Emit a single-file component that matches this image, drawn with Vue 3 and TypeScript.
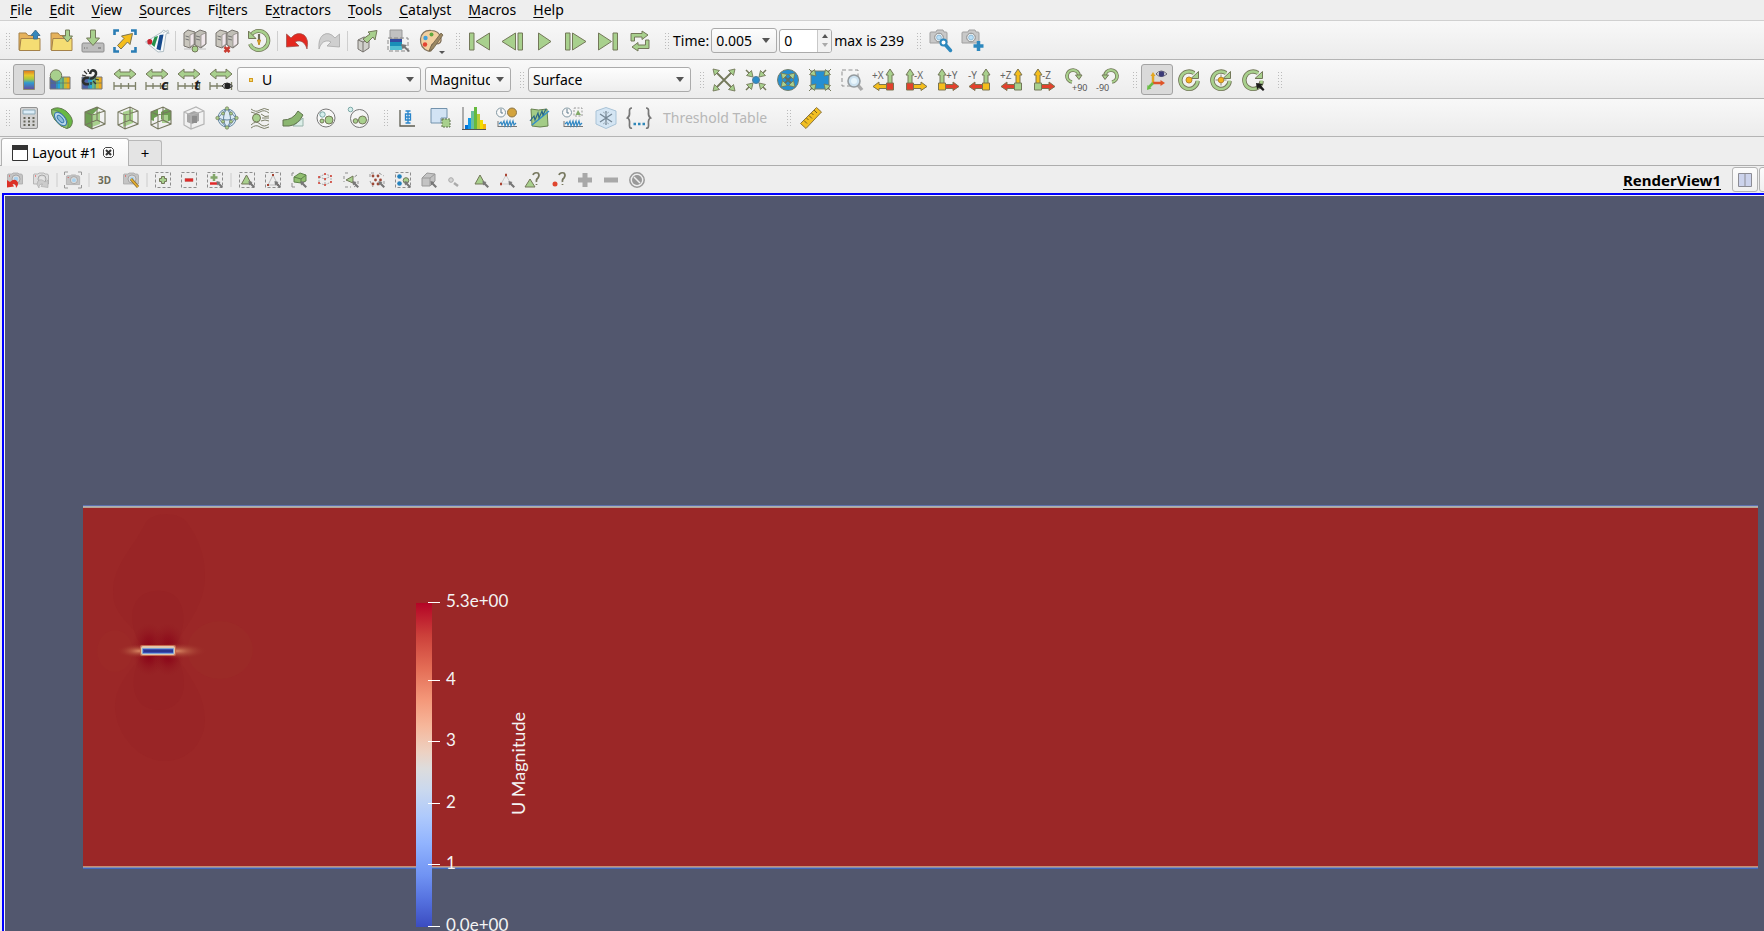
<script setup lang="ts">
import { ref } from 'vue'

interface Tool {
  kind: 'tool' | 'sep'
  icon?: string
  label?: string
  active?: boolean
}

const green = 'fill="#a8d08d" stroke="#737859"'
const yellow = 'fill="#f4bd1c" stroke="#7c7450"'
const red = 'fill="#e2412d" stroke="#7c7450"'
const dash = 'fill="none" stroke="#8f8f8f" stroke-dasharray="4 2.5"'

// Arrow head whose tip sits at (x, y); it points to the upper right at 0 degrees.
const chevron = (x: number, y: number, a: number) =>
  `<path transform="translate(${x} ${y}) rotate(${a})" d="M0 0L-6.500 1.500L-1.500 6.500Z" fill="#a8d08d" stroke="#737859" stroke-width=".9"/>`

const scaleTicks = '<path d="M1 18H23M1 14V22M8 15V21M15.500 15V21M22.500 14V22" fill="none" stroke="#7d8068" stroke-width="1.300"/>'
const doubleArrow = `<path d="M1 6L7 1V4H17V1L23 6L17 11V8H7V11Z" ${green}/>`
const jet =
  '<path d="M1 9H21V21H1Z" fill="#2da3c7"/><path d="M1 9H7V21H1Z" fill="#4d63a8"/><path d="M7 9H11V21H7Z" fill="#22a5dd"/><path d="M11 9H15V21H11Z" fill="#65b98c"/><path d="M15 9H18V21H15Z" fill="#c2bc3b"/><path d="M18 9H21V21H18Z" fill="#efaa1c"/><path d="M1 15H21M8 9V21M14 9V21" stroke="#5d7168" stroke-width=".7"/><path d="M1 9H21V21H1Z" fill="none" stroke="#777"/>'
const server = (mark: string) =>
  `<path d="M1 4L5 1L12 3V15L7 19L1 17Z" fill="#c9c6bd" stroke="#77736e"/><path d="M7 6V18L11 15V4Z" fill="#efe6ea" stroke="#77736e" stroke-width=".6"/><path d="M12 4L17 1L23 3V15L18 19L12 16Z" fill="#c0beb6" stroke="#77736e"/><path d="M18 6V18L22.500 15V4Z" fill="#efe6ea" stroke="#77736e" stroke-width=".6"/><path d="M2.500 7L6 8M2.500 10L6 11M13 7L17 8M13 10L17 11" stroke="#777"/>${mark}`
const cubeLines = '<path d="M2 6L14 1L22 5V18L9 23L2 19ZM2 6L9 9L22 5M9 9V23M14 1V14L2 19M14 14L22 18" fill="none" stroke="#76785f" stroke-width="1.100"/>'
const camera = (c: string) =>
  `<path d="M2 3H7L8 1H14L15 3H17Q18 3 18 4V14H1V4Q1 3 2 3Z" fill="${c}" stroke="#a0a0a0"/><circle cx="10" cy="8.500" r="4.300" fill="#e9eef0" stroke="#8c8c8c"/><circle cx="10" cy="8.500" r="2.400" fill="#b9dff7" stroke="#6da3c5" stroke-width=".6"/>`

const axisIcon = (text: string, up: string, side: string, corner: string, rightward: boolean) => {
  const x = rightward ? 6 : 18
  const dir = rightward ? 1 : -1
  const tx = rightward ? 10 : 0
  return `<path d="M${x - 2} 17V7H${x - 4}L${x} 1L${x + 4} 7H${x + 2}V17Z" ${up}/><path d="M${x} 16.500H${x + dir * 11}V14L${x + dir * 17} 18.500L${x + dir * 11} 22.500V20.500H${x}Z" ${side}/><path d="M${x - 3.5} 15H${x + 3.5}V22H${x - 3.5}Z" ${corner}/><text x="${tx}" y="10.500" font-family="Noto Sans, sans-serif" font-size="10" fill="#666">${text}</text>`
}

const rotateArrow = `<path d="M17 5A8.700 8.700 0 1 0 20.700 13" fill="none" stroke="#737859" stroke-width="4.400"/><path d="M17.500 5.500A8.700 8.700 0 1 0 20.700 12.500" fill="none" stroke="#a8d08d" stroke-width="2.600"/><path d="M21.500 3.500V10.500H14Z" ${green}/>`

const icons: Record<string, string> = {
  open: '<path d="M2 21V4H9L11 6.500H18V21Z" fill="#e6b25b" stroke="#a5824a"/><path d="M4 9.500H23V21.500H2.500Z" fill="#f5dd73" stroke="#a5824a"/><path d="M18.500 1L23 6.500H20.500V10H16.500V6.500H14Z" fill="#3488bd" stroke="#417393"/>',
  load: `<path d="M2 21V4H9L11 6.500H18V21Z" fill="#e6b25b" stroke="#a5824a"/><path d="M4 9.500H23V21.500H2.500Z" fill="#f5dd73" stroke="#a5824a"/><path d="M16.500 1H20.500V7H23.500L18.500 13L13.500 7H16.500Z" ${green}/>`,
  save: `<path d="M2 14H22Q23 14 23 16V22Q23 23 22 23H2Q1 23 1 22V16Q1 14 2 14Z" fill="#bdbdbd" stroke="#8d8d8d"/><path d="M3 19H4M5.500 19H6.500M17 19H20" stroke="#666"/><path d="M9.500 1H14.500V9H18.500L12 16.500L5.500 9H9.500Z" ${green}/>`,
  extract: '<path d="M1.500 6V1.500H6M18 1.500H22.500V6M22.500 18V22.500H18M6 22.500H1.500V18" fill="none" stroke="#2a7db5" stroke-width="2.600"/><path d="M8.500 7L19.500 4.500L17 15.500L14.500 13L8 20L4.500 16.500L11 9.500Z" fill="#f4bd1c" stroke="#7c7450"/>',
  paraview: '<path d="M.500 13L17 3L18.500 1L23.500 4L21 5L18.500 22.500L13 23Z" fill="#f7fafb" stroke="#9fb0b8" stroke-width=".8"/><ellipse cx="4.800" cy="12.800" rx="2.500" ry="2.800" fill="#c8222d"/><path d="M9.500 8L13 7L9.500 18L6.500 15.500Z" fill="#23904a"/><path d="M14.500 6L18.500 5.500L15.500 21.500L11.500 20Z" fill="#164a8c"/><path d="M18 4L23 1L24 5" stroke="#b4bec3" stroke-width=".8" fill="none"/>',
  connect: server(`<circle cx="12" cy="20" r="3" ${green}/><path d="M1 20H8.500M15.500 20H23" stroke="#aaa" stroke-width=".7"/>`),
  disconnect: server('<path d="M9.500 18L14.500 23M14.500 18L9.500 23" stroke="#c93b30" stroke-width="2.600"/>'),
  history: `<path d="M4 6A9.500 9.500 0 1 1 3 15" fill="none" stroke="#737859" stroke-width="4"/><path d="M4 6A9.500 9.500 0 1 1 3 15" fill="none" stroke="#a8d08d" stroke-width="2.500"/><path d="M1.500 2V9.500H9Z" ${green}/><path d="M12 5V12" stroke="#6f6f5a" stroke-width="2.200"/><path d="M10.500 11H13.500L12 16Z" fill="#e8b12c" stroke="#bf8a20"/>`,
  undo: '<path d="M1.500 5L6 9Q12 2 19 6Q24 10 22 20Q20 13 15 12Q12 11.500 10 13L14 17L1.500 18Z" fill="#e4281f" stroke="#9b4b45" stroke-width=".7"/>',
  redo: '<path d="M22.500 5L18 9Q12 2 6 6Q1 10 2 20Q4 13 9 12Q12 11.500 14 13L10 17L22.500 18Z" fill="#cfcfcf" stroke="#a8a8a8" stroke-width=".8"/>',
  block: `<path d="M3 11L9 8L14 10V19L8 23L3 20Z" fill="#d0d0cb" stroke="#77736e"/><path d="M3 11L8 13V23M8 13L14 10" fill="none" stroke="#77736e"/><path d="M8 10L15 5L13 3L22 1.500L20 11L18 8L12 14Z" ${green}/>`,
  blockcolor: '<path d="M3 1H15V10H3Z" fill="#c1c1c1" stroke="#999"/><path d="M3 10H15V13H3Z" fill="#334b9f"/><path d="M3 13H15V17H3Z" fill="#198fb8"/><path d="M3 17H15V21H3Z" fill="#51bfd1"/><path d="M1 9H21V22H1Z" fill="none" stroke="#888" stroke-dasharray="4 2"/><path d="M14 15L20 16L18.500 17.500L23 22L21.500 23L17 19L15.500 20.500Z" fill="#777"/>',
  palette: '<path d="M12 1.500Q3 1 1.500 10Q1 19 9 22Q13 23 13 19Q11 14 17 15Q23 15 22 9Q20 1.500 12 1.500Z" fill="#f1cfa0" stroke="#82735e" stroke-width="1.200"/><circle cx="6.500" cy="9" r="2.200" fill="#42a0db"/><circle cx="12.500" cy="5.500" r="2" fill="#5fa83e"/><circle cx="6" cy="15.500" r="2.200" fill="#e34333"/><path d="M22 4L24 6L14 20L10 22L12 17Z" fill="#9b8863" stroke="#63563e" stroke-width=".7"/>',
  first: `<path d="M1.500 4H6V21H1.500Z" ${green}/><path d="M21.500 4V21L8 12.500Z" ${green}/>`,
  prev: `<path d="M18 4H22.500V21H18Z" ${green}/><path d="M15.500 4V21L2 12.500Z" ${green}/>`,
  play: `<path d="M6.500 4V21L19 12.500Z" ${green}/>`,
  next: `<path d="M1.500 4H6V21H1.500Z" ${green}/><path d="M8.500 4V21L22 12.500Z" ${green}/>`,
  last: `<path d="M17 4H21.500V21H17Z" ${green}/><path d="M2.500 4V21L15.500 12.500Z" ${green}/>`,
  loop: `<path d="M3 4.500H14V2L20 6L14 10.500V8H6.500V12H3Z" ${green}/><path d="M21 19.500H10V22L4 18L10 13.500V16H17.500V11H21Z" ${green}/>`,
  camtool: camera('#c8c8c8') + '<path d="M14 13L21.500 21.500" stroke="#2d88be" stroke-width="3.500" stroke-linecap="round"/><circle cx="14.500" cy="13.500" r="3" fill="#fff" stroke="#2d88be" stroke-width="2"/>',
  camadd: camera('#c8c8c8') + '<path d="M12.500 17H22.500M17.500 12V22" stroke="#2d88be" stroke-width="3.500"/>',
  colorbar: '<defs><linearGradient id="cb" x1="0" y1="0" x2="0" y2="1"><stop offset="0" stop-color="#dc7422"/><stop offset=".25" stop-color="#e9c92b"/><stop offset=".45" stop-color="#a9c83e"/><stop offset=".65" stop-color="#2f9ad2"/><stop offset="1" stop-color="#684a9a"/></linearGradient></defs><path d="M6.500 2.500H17.500V21.500H6.500Z" fill="url(#cb)" stroke="#8f8a70"/>',
  editmap: jet + `<circle cx="7" cy="7.500" r="5.700" ${green}/>`,
  separate: jet + '<path d="M8 16Q2 17 2 13Q3 9 8 10M9 6Q10 1 14 3Q17 6 12 10Q10 11 9 10" fill="none" stroke="#2c302e" stroke-width="2.600"/><path d="M3 3L6 6M1 7L5 8M7 1L7.500 4M12 13L15 16M14 11L18 12M10 14V17" stroke="#333" stroke-width="1.200"/>',
  rescale: doubleArrow + scaleTicks,
  rescalec: doubleArrow + scaleTicks + '<text x="16" y="22" font-family="Open Sans, sans-serif" font-weight="bold" font-style="italic" font-size="15" fill="#222">c</text>',
  rescalet: doubleArrow + scaleTicks + '<text x="17" y="22" font-family="Open Sans, sans-serif" font-weight="bold" font-style="italic" font-size="15" fill="#222">t</text>',
  rescalev: doubleArrow + scaleTicks + '<path d="M13 18Q18 12 23.500 18Q18 23 13 18Z" fill="#ddd" stroke="#333"/><circle cx="18.500" cy="18" r="3" fill="#222"/>',
  resetcam: `<path d="M4 4L20 20M20 4L4 20" stroke="#737859" stroke-width="1.800"/>${chevron(1, 1, 270)}${chevron(23, 1, 0)}${chevron(23, 23, 90)}${chevron(1, 23, 180)}`,
  zoomdata: `<path d="M2 2L6 6M22 2L18 6M22 22L18 18M2 22L6 18" stroke="#737859" stroke-width="1.500"/>${chevron(9, 9, 90)}${chevron(15, 9, 180)}${chevron(15, 15, 270)}${chevron(9, 15, 0)}<circle cx="12" cy="12" r="3.500" fill="#2a8dcb" stroke="#4f7c9a"/>`,
  resetclose: `<circle cx="12" cy="12" r="10.500" fill="#258fd2" stroke="#77806c"/><path d="M7 7L17 17M17 7L7 17" stroke="#5d7164" stroke-width="1.800"/>${chevron(5, 5, 270)}${chevron(19, 5, 0)}${chevron(19, 19, 90)}${chevron(5, 19, 180)}`,
  zoomclose: `<path d="M3 3H21V21H3Z" fill="#258fd2" stroke="#77806c"/>${chevron(8, 8, 90)}${chevron(16, 8, 180)}${chevron(16, 16, 270)}${chevron(8, 16, 0)}<path d="M1 1L4 4M23 1L20 4M23 23L20 20M1 23L4 20" stroke="#737859"/>`,
  zoombox: `<path d="M2 2H18V18H2Z" ${dash}/><path d="M17 16L22 22" stroke="#aaa" stroke-width="3.500"/><circle cx="14" cy="13" r="6" fill="#cde2f0" stroke="#949b9f" stroke-width="1.600"/><circle cx="14" cy="13" r="3" fill="#e8f5fb"/>`,
  px: axisIcon('+X', green, yellow, red, false),
  nx: axisIcon('-X', green, yellow, red, true),
  py: axisIcon('+Y', green, red, yellow, true),
  ny: axisIcon('-Y', green, red, yellow, false),
  pz: axisIcon('+Z', yellow, red, green, false),
  nz: axisIcon('-Z', yellow, red, green, true),
  rotp: `<path d="M8 14A6 6 0 1 1 15 8" fill="none" stroke="#737859" stroke-width="3.800"/><path d="M8 14A6 6 0 1 1 15 8" fill="none" stroke="#a8d08d" stroke-width="2.200"/><path d="M11.500 7H18L15 11.500Z" ${green}/><text x="8" y="23" font-family="Noto Sans, sans-serif" font-size="9" fill="#555">+90</text>`,
  rotn: `<path d="M16 14A6 6 0 1 0 9 8" fill="none" stroke="#737859" stroke-width="3.800"/><path d="M16 14A6 6 0 1 0 9 8" fill="none" stroke="#a8d08d" stroke-width="2.200"/><path d="M6 7H12.500L9 11.500Z" ${green}/><text x="0" y="23" font-family="Noto Sans, sans-serif" font-size="9" fill="#555">-90</text>`,
  axes: '<path d="M8 16V7" stroke="#e3a723" stroke-width="2.500"/><path d="M5.500 8L8 4L10.500 8Z" fill="#e3a723"/><path d="M8 15H17" stroke="#df5428" stroke-width="2.500"/><path d="M15.500 12L20 15L15.500 18Z" fill="#df5428"/><path d="M8 15L4 19" stroke="#69bd46" stroke-width="2.500"/><path d="M2.500 17L6.500 20.500L2 22Z" fill="#69bd46"/><path d="M11 6Q16 0 22 6Q16 11 11 6Z" fill="#eee" stroke="#626070"/><circle cx="16.500" cy="6" r="2.800" fill="#3b3b78"/>',
  center: rotateArrow + '<circle cx="12" cy="12" r="3" fill="#f2b31e" stroke="#b9852d"/>',
  resetcenter: rotateArrow + '<path d="M12 6.500V17.500M6.500 12H17.500" stroke="#8a8d75"/><circle cx="12" cy="12" r="2.800" fill="#f2b31e" stroke="#b9852d"/>',
  pickcenter: rotateArrow + '<path d="M15 15L22 16L20 17.500L23.500 21.500L22 23L18 19.500L16 21.500Z" fill="#1c1c1c"/>',
  calculator: '<path d="M5 1.500H19Q20.500 1.500 20.500 3V21Q20.500 22.500 19 22.500H5Q3.500 22.500 3.500 21V3Q3.500 1.500 5 1.500Z" fill="#d2d2d2" stroke="#929292"/><path d="M6 4H18V8H6Z" fill="#dcedf8" stroke="#8eabb9"/><path d="M6.500 12H8.500M11 12H13M15.500 12H17.500M6.500 15.500H8.500M11 15.500H13M15.500 15.500H17.500M6.500 19H8.500M11 19H13M15.500 19H17.500" stroke="#67675c" stroke-width="2"/>',
  contour: '<path d="M1.500 3.500Q8-.5 16 5Q24 12 22 18Q21 22 17 22.500Q10 21 5 14Q1 8 1.500 3.500Z" fill="#68b944" stroke="#667b51"/><path d="M1.500 3.500Q9 4 15 11Q20 18 17 22.500Q10 21 5 14Q1 8 1.500 3.500Z" fill="#8fc46e" stroke="#667b51" stroke-width=".8"/><ellipse cx="10.500" cy="13" rx="8" ry="4.300" transform="rotate(50 10.500 13)" fill="#bad7eb" stroke="#3779ac"/><ellipse cx="10.500" cy="13" rx="4.500" ry="2" transform="rotate(50 10.500 13)" fill="#8dbcd9" stroke="#3779ac"/>',
  clip: `<path d="M2 6L14 1L16 2L9 9V23L2 19Z" fill="#6d9e53"/><path d="M9 9L17 5V18L9 21Z" fill="#a8d08d"/>${cubeLines}`,
  slice: `<path d="M7 6L17 3V17L7 21Z" fill="#a8d08d"/>${cubeLines}`,
  threshold: `<path d="M2 6L9 3V10L5 12V15L2 14ZM12 6L17 3L22 5V14L16 17L12 13Z" fill="#6d9e53"/><path d="M13 9H19V17H13Z" fill="#a8d08d"/>${cubeLines}`,
  subset: '<path d="M5 8L12 5L17 7V15L10 18L5 16Z" fill="#a6a6a6"/><path d="M10 10H15V17H10Z" fill="#8d8d8d"/><path d="M2 6L14 1L22 5V18L9 23L2 19ZM2 6L9 9L22 5M9 9V23" fill="none" stroke="#b4b4b4" stroke-width="1.200"/>',
  glyph: `<circle cx="12" cy="12" r="9" fill="#dceaf5" stroke="#6487a0"/><path d="M12 2L21 12L12 22L3 12ZM3 12Q12 16 21 12M12 2Q5 12 12 22M12 2Q19 12 12 22" fill="none" stroke="#6487a0"/><g ${green} stroke-width=".7"><circle cx="12" cy="2.500" r="1.700"/><circle cx="2.500" cy="12" r="1.700"/><circle cx="21.500" cy="12" r="1.700"/><circle cx="12" cy="21.500" r="1.700"/><circle cx="8" cy="7.500" r="1.500"/><circle cx="16" cy="7.500" r="1.500"/><circle cx="8" cy="15.500" r="1.500"/><circle cx="16" cy="15.500" r="1.500"/></g>`,
  stream: `<path d="M3 3Q8 7 12 4T21 4M3 6Q8 9 12 6T21 7M13 8Q17 12 21 10M14 12H21M13 15Q17 13 21 15M3 19Q8 14 12 18T21 18M3 22Q8 18 12 21T21 21" fill="none" stroke="#7d8069"/><circle cx="8.500" cy="12" r="4" ${green}/>`,
  warp: `<path d="M12 20L22 12V20Z" fill="#dceee8" stroke="#98b4ab"/><path d="M2 20V14Q12 14 17 5L22 9Q17 19 8 20Z" fill="#8bb670" stroke="#5f734d"/>`,
  group: `<circle cx="12" cy="12" r="9" fill="#f7f7f7" stroke="#777"/><circle cx="8.500" cy="8.500" r="2.700" fill="#d5eeec" stroke="#7ca8a6"/><circle cx="15" cy="14" r="4" ${green}/><circle cx="8" cy="15" r="2" ${green}/>`,
  extractblock: `<circle cx="12.500" cy="12.500" r="9" fill="#f4f4f4" stroke="#777"/><circle cx="3.500" cy="3.500" r="2.300" fill="#d5eeec" stroke="#7ca8a6"/><circle cx="15.500" cy="14" r="4" ${green}/><circle cx="8.500" cy="15" r="2.300" ${green}/>`,
  boxplot: '<path d="M4 4V20H19" fill="none" stroke="#5e5e52" stroke-width="1.300"/><path d="M12 5V17M9.500 5H14.500M9.500 17H14.500M9.500 8H14.500V14H9.500ZM9.500 11H14.500" fill="none" stroke="#2885cb" stroke-width="1.300"/>',
  selectextract: '<path d="M2 2.500H18V12H12V17H2Z" fill="#d2e3f4" stroke="#7392ac"/><path d="M13 13H21V21H13Z" fill="#a8d08d" stroke="#5e724c" stroke-dasharray="2 1"/>',
  histogram: '<path d="M1 1V23" stroke="#666"/><path d="M3 19H6V23H3Z" fill="#0072d8"/><path d="M6 12H9V23H6Z" fill="#1398e9"/><path d="M9 5H12V23H9Z" fill="#67bf9f"/><path d="M12 1H15V23H12Z" fill="#65ba3e"/><path d="M15 8H18V23H15Z" fill="#bacb36"/><path d="M18 14H21V23H18Z" fill="#f3dc00"/><path d="M21 18H24V23H21Z" fill="#f5b511"/><path d="M0 23.500H24" stroke="#555"/>',
  overtime: '<circle cx="6" cy="6.500" r="4.500" fill="#f8f8f8" stroke="#8297a2"/><path d="M6 3V7H8" fill="none" stroke="#5e7b8c"/><circle cx="17" cy="6.500" r="4.500" fill="#d3a33d" stroke="#8b7446"/><path d="M3 15V21M3 20.500H22" stroke="#777"/><path d="M4 18L6 16L7 19L9 15L10 20L12 15L13 20L15 15L16 20L18 15L19 19L21 17" fill="none" stroke="#3188c4" stroke-width="1.200"/>',
  overline: '<path d="M3 3Q10 5 19 3L20 20Q12 22 4 20Z" fill="#a3cc86" stroke="#67824f"/><path d="M4 19L21 5" stroke="#2f8cc9" stroke-width="1.500"/><path d="M2 15L6 10L7 14L10 7L11 12L14 5L15 9L18 3" fill="none" stroke="#286688" stroke-width="1.200"/>',
  selovertime: '<circle cx="6" cy="6.500" r="4.500" fill="#f8f8f8" stroke="#8297a2"/><path d="M6 3V7H8" fill="none" stroke="#5e7b8c"/><path d="M13 2H21V10H13Z" fill="none" stroke="#999" stroke-dasharray="2 1.500"/><path d="M14.500 9L17 4L20 9Z" fill="#82aa6a"/><path d="M3 15V21M3 20.500H22" stroke="#777"/><path d="M4 18L6 16L7 19L9 15L10 20L12 15L13 20L15 15L16 20L18 15L19 19L21 17" fill="none" stroke="#3188c4" stroke-width="1.200"/>',
  freeze: '<path d="M12 1.500L22 5V18L12 22.500L2 18V5Z" fill="#d4e5f3" stroke="#a9c3d7"/><path d="M12 5V19M6 8L18 16M18 8L6 16" stroke="#748694" stroke-width="1.300"/><path d="M9 6L12 8L15 6M9 18L12 16L15 18" fill="none" stroke="#a3b3bf"/>',
  braces: '<path d="M5 2Q2 2 2.500 6T0.500 12Q3 13 2.500 18T5 22M19 2Q22 2 21.500 6T23.500 12Q21 13 21.500 18T19 22" fill="none" stroke="#777" stroke-width="1.700"/><path d="M6.500 18H9M11 18H13.500M15.500 18H18" stroke="#2e86b8" stroke-width="2.300"/>',
  ruler: '<path d="M17.500 1.500L22.500 6L7 22.500L1.500 17.500Z" fill="#f2bf22" stroke="#8c7640"/><path d="M15 4L18 7M12.500 7L14.500 9M10 9.500L13 12.500M7.500 12L9.500 14M5 14.500L8 17.500" stroke="#755e1d"/>'
}

const t = (icon: string, label: string, active = false): Tool => ({ kind: 'tool', icon, label, active })
const sep: Tool = { kind: 'sep' }

const fileTools = [t('open', 'Open'), t('load', 'Load state'), t('save', 'Save data'), t('extract', 'Save extracts'), t('paraview', 'Save state'), sep,
  t('connect', 'Connect'), t('disconnect', 'Disconnect'), t('history', 'Reset session'), sep, t('undo', 'Undo'), t('redo', 'Redo'), sep,
  t('block', 'Auto apply'), t('blockcolor', 'Find data'), t('palette', 'Color palette')]
const vcrTools = [t('first', 'First frame'), t('prev', 'Previous frame'), t('play', 'Play'), t('next', 'Next frame'), t('last', 'Last frame'), t('loop', 'Loop')]
const camTools = [t('camtool', 'Adjust camera'), t('camadd', 'Add camera link')]
const colorTools = [t('colorbar', 'Color legend', true), t('editmap', 'Edit color map'), t('separate', 'Separate color map'), t('rescale', 'Rescale to data'), t('rescalec', 'Rescale to custom'), t('rescalet', 'Rescale over time'), t('rescalev', 'Rescale to visible')]
const viewTools = [t('resetcam', 'Reset camera'), t('zoomdata', 'Zoom to data'), t('resetclose', 'Reset camera closest'), t('zoomclose', 'Zoom closest'), t('zoombox', 'Zoom to box'),
  t('px', '+X'), t('nx', '-X'), t('py', '+Y'), t('ny', '-Y'), t('pz', '+Z'), t('nz', '-Z'), t('rotp', 'Rotate +90'), t('rotn', 'Rotate -90')]
const centerTools = [t('axes', 'Orientation axes', true), t('center', 'Show center'), t('resetcenter', 'Reset center'), t('pickcenter', 'Pick center')]
const filterTools = [t('calculator', 'Calculator'), t('contour', 'Contour'), t('clip', 'Clip'), t('slice', 'Slice'), t('threshold', 'Threshold'), t('subset', 'Extract subset'), t('glyph', 'Glyph'), t('stream', 'Stream tracer'), t('warp', 'Warp'), t('group', 'Group datasets'), t('extractblock', 'Extract block')]
const analysisTools = [t('boxplot', 'Statistics'), t('selectextract', 'Extract selection'), t('histogram', 'Histogram'), t('overtime', 'Plot over time'), t('overline', 'Plot over line'), t('selovertime', 'Plot selection'), t('freeze', 'Freeze'), t('braces', 'Programmable filter')]

const box = '<path d="M.500 .500H15.500V15.500H.500Z" fill="none" stroke="#8d8d8d" stroke-dasharray="3 2"/>'
const cursor = '<path d="M9.500 9L13.500 10L12.500 11L16 14.500L14.500 16L11 12.500L10 13.500Z" fill="#777"/>'
const smallCam = (body: string, lens: string) =>
  `<path d="M1 2H5L6 1H11L12 2H14Q15.500 2 15.500 4V12H.500V4Q.500 2 1 2Z" fill="${body}" stroke="#aaa" stroke-width=".8"/><circle cx="9" cy="7" r="4" fill="#ddd" stroke="#999" stroke-width=".8"/><circle cx="9" cy="7" r="2.300" fill="${lens}"/><path d="M2 4H3" stroke="#e33"/>`

const smallIcons: Record<string, string> = {
  camundo: smallCam('#c4c4c4', '#a9d2ee') + '<path d="M0 8L3 10Q7 6 10 9Q12.500 12 9 16Q9 11.500 5.500 12L7 14.500L0 15.500Z" fill="#dc3026"/>',
  camredo: smallCam('#dedede', '#e5e5e5') + '<path d="M15 8L12 10Q8 6 5 9Q2.500 12 6 16Q6 11.500 9.500 12L8 14.500L15 15.500Z" fill="#ccc" stroke="#aaa" stroke-width=".6"/>',
  capture: '<g transform="translate(1 2) scale(.88)">' + smallCam('#c4c4c4', '#a9d2ee') + '</g><path d="M-.500 3V0H3M13 0H16.500V3M16.500 13V16H13M3 16H-.500V13" fill="none" stroke="#999"/>',
  d3: '<text x="1" y="12" font-family="Noto Sans, sans-serif" font-weight="bold" font-size="10" fill="#6b6b59">3D</text>',
  camedit: smallCam('#c4c4c4', '#a9d2ee') + '<path d="M8 7L15 15" stroke="#8a6d31" stroke-width="3"/><path d="M8 7L15 15" stroke="#e7b02e" stroke-width="1.500"/>',
  add: box + `<path d="M6.500 4.500H9.500V6.500H11.500V9.500H9.500V11.500H6.500V9.500H4.500V6.500H6.500Z" ${green}/>`,
  sub: box + '<path d="M4 6.500H12V9.500H4Z" fill="#e12929" stroke="#b95b55" stroke-width=".5"/>',
  toggle: box + '<path d="M7 2V9M3.500 5.500H10.500" stroke="#82a669" stroke-width="2.500"/><path d="M3 11.500H10" stroke="#e12929" stroke-width="2.500"/>' + cursor,
  selcells: box + `<path d="M7.500 3L12.500 12H2.500Z" ${green}/>` + cursor,
  selpoints: box + '<path d="M8 3L13 13H3Z" fill="none" stroke="#bbb"/><path d="M8 2V4M2 13H4M12 13H14" stroke="#a54635" stroke-width="2"/>' + cursor,
  frucells: `<path d="M3 5L9 1L15 3V9L10 11L3 10Z" fill="#91bf70" stroke="#5e824b"/><path d="M3 5L10 7L15 3M10 7V11" fill="none" stroke="#5e824b"/><path d="M1 4V1H3M1 11V15H4" fill="none" stroke="#8d8d8d"/>` + cursor,
  frupoints: '<path d="M2 5L8 2L14 4V10L8 13L2 11ZM2 5L8 7L14 4M8 7V13" fill="none" stroke="#aaa" stroke-dasharray="2 1"/><path d="M1 5H3M7 2H9M13 4H15M7 7H9M1 11H3M7 13H9M13 10H15" stroke="#d33c30" stroke-width="1.700"/>',
  polycells: '<path d="M2 1H7M1 4V10M2 15H8M11 15L15 12V8M14 3L10 6" fill="none" stroke="#8d8d8d" stroke-dasharray="3 2"/>' + `<path d="M10 4V11L3 8Z" ${green}/>` + cursor,
  polypoints: '<path d="M1 5V1H6M10 1L15 4M15 9V13M1 9L4 15" fill="none" stroke="#999" stroke-dasharray="3 2"/><g fill="#9d4937"><circle cx="4" cy="4" r="1.400"/><circle cx="9" cy="4" r="1.400"/><circle cx="6.500" cy="8" r="1.400"/><circle cx="11.500" cy="8" r="1.400"/><circle cx="4" cy="12" r="1.400"/><circle cx="9" cy="12" r="1.400"/></g>' + cursor,
  blocks: box + `<circle cx="4.500" cy="4.500" r="2.300" fill="#2582bd"/><circle cx="4.500" cy="11.500" r="2.300" fill="#2582bd"/><circle cx="11" cy="8.500" r="2.800" ${green}/>` + cursor,
  fruBlocks: '<path d="M1 6L6 1L14 2V9L9 14H1Z" fill="#c3c3c3" stroke="#999"/><path d="M1 6H9L14 2M9 6V14" fill="none" stroke="#999"/>' + cursor,
  hoverpt: '<circle cx="4" cy="8" r="2.300" fill="#d4d4d4" stroke="#aaa"/><path d="M7 11L11 14" stroke="#aaa" stroke-width="2.500"/>',
  hovercell: `<path d="M7 3L12 12H2Z" ${green}/>` + cursor,
  interpt: '<path d="M7 3L12 12H2Z" fill="none" stroke="#ccc"/><path d="M6 3H8M1 12H3" stroke="#aa4635" stroke-width="2.500"/>' + cursor,
  askcell: `<path d="M5 7L10 15H0Z" ${green}/><path d="M8 3Q9 0 13 1Q15 3 13 6Q11 7 11.500 10M11.500 12V13" fill="none" stroke="#77785f" stroke-width="1.700"/>`,
  askpt: '<circle cx="4" cy="12" r="2.500" fill="#df452e"/><path d="M8 3Q9 0 13 1Q15 3 13 6Q11 7 11.500 10M11.500 12V13" fill="none" stroke="#77785f" stroke-width="1.700"/>',
  grow: '<path d="M1 8H15M8 1V15" stroke="#a8a8a8" stroke-width="5"/>',
  shrink: '<path d="M1 8H15" stroke="#a8a8a8" stroke-width="5"/>',
  clear: '<circle cx="8" cy="8" r="7.200" fill="#eee" stroke="#999" stroke-width="1.500"/><circle cx="8" cy="8" r="5" fill="#999"/><path d="M5 5L11 11" stroke="#eee" stroke-width="1.500"/>'
}

const renderTools: Tool[] = [t('camundo', 'Camera undo'), t('camredo', 'Camera redo'), sep, t('capture', 'Capture'), sep, t('d3', 'Interaction mode'), t('camedit', 'Adjust camera'), sep,
  t('add', 'Add selection'), t('sub', 'Subtract selection'), t('toggle', 'Toggle selection'), sep,
  t('selcells', 'Select cells'), t('selpoints', 'Select points'), t('frucells', 'Select cells through'), t('frupoints', 'Select points through'),
  t('polycells', 'Select cells with polygon'), t('polypoints', 'Select points with polygon'), t('blocks', 'Select blocks'), t('fruBlocks', 'Select blocks through'),
  t('hoverpt', 'Pick point'), t('hovercell', 'Pick cell'), t('interpt', 'Pick interactively'), t('askcell', 'Query cell'), t('askpt', 'Query point'),
  t('grow', 'Grow selection'), t('shrink', 'Shrink selection'), t('clear', 'Clear selection')]

const menus = [['', 'F', 'ile'], ['', 'E', 'dit'], ['', 'V', 'iew'], ['', 'S', 'ources'], ['', 'F', 'ilters'], ['', 'E', 'xtractors'], ['', 'T', 'ools'], ['', 'C', 'atalyst'], ['', 'M', 'acros'], ['', 'H', 'elp']]
menus[4] = ['Fi', 'l', 'ters']
menus[5] = ['E', 'x', 'tractors']

const legendMax = 5.26
const ticks = [
  { value: 5.26, text: '5.3e+00' },
  { value: 4, text: '4' },
  { value: 3, text: '3' },
  { value: 2, text: '2' },
  { value: 1, text: '1' },
  { value: 0, text: '0.0e+00' }
].map((k) => ({ ...k, top: `${(1 - k.value / legendMax) * 100}%` }))

const frame = ref('0')
const step = (d: number) => {
  frame.value = String(Math.min(239, Math.max(0, Number(frame.value) + d)))
}
</script>

<template>
  <div class="window">
    <nav class="menubar">
      <button v-for="m in menus" :key="m.join('')">{{ m[0] }}<u>{{ m[1] }}</u>{{ m[2] }}</button>
    </nav>

    <div class="toolbar">
      <i class="handle"></i>
      <div class="group">
        <template v-for="(b, i) in fileTools" :key="i">
          <span v-if="b.kind === 'sep'" class="sep"></span>
          <button v-else class="tool" :class="{ dropdown: b.icon === 'palette' }" :aria-label="b.label"><svg viewBox="0 0 24 24" v-html="icons[b.icon!]"></svg></button>
        </template>
      </div>
      <i class="handle"></i>
      <div class="group">
        <button v-for="b in vcrTools" :key="b.icon" class="tool" :aria-label="b.label"><svg viewBox="0 0 24 24" v-html="icons[b.icon!]"></svg></button>
      </div>
      <i class="handle"></i>
      <div class="group time">
        <label for="time">Time:</label>
        <span class="combo w-time"><select id="time"><option>0.005</option></select></span>
        <span class="spin">
          <input v-model="frame" aria-label="Frame" />
          <span class="steps">
            <button class="up" aria-label="Increase" @click="step(1)"></button>
            <button class="down" aria-label="Decrease" @click="step(-1)"></button>
          </span>
        </span>
        <span>max is 239</span>
      </div>
      <i class="handle"></i>
      <div class="group">
        <button v-for="b in camTools" :key="b.icon" class="tool" :aria-label="b.label"><svg viewBox="0 0 24 24" v-html="icons[b.icon!]"></svg></button>
      </div>
    </div>

    <div class="toolbar">
      <i class="handle"></i>
      <div class="group">
        <button v-for="b in colorTools" :key="b.icon" class="tool" :class="{ active: b.active }" :aria-label="b.label"><svg viewBox="0 0 24 24" v-html="icons[b.icon!]"></svg></button>
        <span class="combo w-array"><select aria-label="Array"><option>U</option></select></span>
        <span class="combo w-comp"><select aria-label="Component"><option>Magnitude</option></select></span>
      </div>
      <i class="handle"></i>
      <div class="group">
        <span class="combo w-repr"><select aria-label="Representation"><option>Surface</option></select></span>
      </div>
      <i class="handle"></i>
      <div class="group">
        <button v-for="b in viewTools" :key="b.icon" class="tool" :aria-label="b.label"><svg viewBox="0 0 24 24" v-html="icons[b.icon!]"></svg></button>
      </div>
      <i class="handle"></i>
      <div class="group">
        <button v-for="b in centerTools" :key="b.icon" class="tool" :class="{ active: b.active }" :aria-label="b.label"><svg viewBox="0 0 24 24" v-html="icons[b.icon!]"></svg></button>
      </div>
      <i class="handle"></i>
    </div>

    <div class="toolbar last">
      <i class="handle"></i>
      <div class="group spaced">
        <button v-for="b in filterTools" :key="b.icon" class="tool" :aria-label="b.label"><svg viewBox="0 0 24 24" v-html="icons[b.icon!]"></svg></button>
      </div>
      <i class="handle"></i>
      <div class="group spaced">
        <button v-for="b in analysisTools" :key="b.icon" class="tool" :aria-label="b.label"><svg viewBox="0 0 24 24" v-html="icons[b.icon!]"></svg></button>
        <button class="textbutton" disabled>Threshold Table</button>
      </div>
      <i class="handle"></i>
      <div class="group">
        <button class="tool" aria-label="Ruler"><svg viewBox="0 0 24 24" v-html="icons.ruler"></svg></button>
      </div>
    </div>

    <div class="tabs">
      <div class="tab">
        <svg class="winicon" viewBox="0 0 16 16"><path d="M.5 .5H15.500V15.500H.5Z" fill="#fff" stroke="#333" /><path d="M0 0H16V5H0Z" fill="#333" /></svg>
        <button class="tabname">Layout #1</button>
        <button class="close" aria-label="Close layout"><svg viewBox="0 0 11 11"><path d="M2.500 .5H8.500L10.500 2.500V8.500L8.500 10.500H2.500L.5 8.500V2.500Z" fill="none" stroke="#444" /><path d="M3 3L8 8M8 3L3 8" stroke="#333" stroke-width="2" /></svg></button>
      </div>
      <button class="newtab">+</button>
    </div>

    <div class="viewbar">
      <template v-for="(b, i) in renderTools" :key="i">
        <span v-if="b.kind === 'sep'" class="sep"></span>
        <button v-else class="small" :aria-label="b.label"><svg viewBox="0 0 16 16" v-html="smallIcons[b.icon!]"></svg></button>
      </template>
      <a class="viewname" href="#">RenderView1</a>
      <button class="split" aria-label="Split horizontally"><svg viewBox="0 0 14 14"><path d="M.5 .5H13.500V13.500H.5Z" fill="#ccd3ec" stroke="#8c8c94" /><path d="M7 0V14" stroke="#8c8c94" /></svg></button>
      <button class="split" aria-label="Split vertically"></button>
    </div>

    <main class="view">
      <div class="field">
        <svg width="240" height="363" viewBox="83 505 240 363">
          <defs>
            <radialGradient id="hot"><stop offset="0" stop-color="#8b0518" /><stop offset=".3" stop-color="#8d0b1b" stop-opacity=".8" /><stop offset="1" stop-color="#931a20" stop-opacity="0" /></radialGradient>
            <radialGradient id="warm"><stop offset="0" stop-color="#d98663" /><stop offset=".35" stop-color="#b85a43" stop-opacity=".8" /><stop offset="1" stop-color="#9b2c27" stop-opacity="0" /></radialGradient>
          </defs>
          <ellipse cx="115" cy="651" rx="18" ry="21" fill="#9c2927" />
          <ellipse cx="220" cy="650" rx="33" ry="29" fill="#9b2a27" />
          <path d="M146 645C130 622 113 615 113 592C113 565 134 547 145 524C151 511 181 511 188 524C201 542 205 560 205 577C204 606 187 624 175 645Z" fill="#992526" />
          <path d="M142 656C126 675 115 688 115 708C117 737 140 761 165 761C190 761 205 740 205 719C204 694 191 678 176 656Z" fill="#992526" />
          <path d="M142 645C132 635 130 612 135 604C141 587 174 586 180 603C186 615 184 630 176 645ZM142 656C128 676 130 710 159 710C188 709 189 677 176 656Z" fill="#972325" />
          <ellipse cx="149" cy="645" rx="17" ry="22" fill="url(#hot)" />
          <ellipse cx="168" cy="645" rx="17" ry="22" fill="url(#hot)" />
          <ellipse cx="149" cy="656" rx="16" ry="20" fill="url(#hot)" />
          <ellipse cx="168" cy="656" rx="16" ry="20" fill="url(#hot)" />
          <ellipse cx="139" cy="651" rx="22" ry="7" fill="url(#warm)" />
          <ellipse cx="177" cy="651" rx="30" ry="8" fill="url(#warm)" />
          <rect x="140" y="645" width="36" height="11" rx="2" fill="#c66a4e" />
          <rect x="141" y="646" width="34" height="9" rx="2" fill="#e3c6ad" />
          <rect x="142" y="648" width="32" height="6" rx="1" fill="#7fa4d2" />
          <rect x="143" y="649" width="30" height="4" fill="#3a4db4" />
          <rect x="144" y="650" width="29" height="2" fill="#2b3790" />
        </svg>
      </div>
      <div class="legend">
        <div class="tick" v-for="k in ticks" :key="k.text" :style="{ top: k.top }">{{ k.text }}</div>
      </div>
      <div class="title">U Magnitude</div>
    </main>
  </div>
</template>

<style>
body {
  margin: 0;
}
</style>

<style scoped>
.window {
  height: 100vh;
  overflow: hidden;
  display: flex;
  flex-direction: column;
  background: #eeeeee;
  color: #000;
  font: 15px/20px "Noto Sans", "Open Sans", sans-serif;
}
button,
input,
select {
  font: inherit;
  color: inherit;
  margin: 0;
  padding: 0;
  border: 0;
  background: none;
}
svg {
  display: block;
  overflow: visible;
}
.menubar {
  display: flex;
  gap: 1px;
  height: 20px;
  padding-left: 2px;
  border-bottom: 1px solid #d0d0d0;
  flex: none;
}
.menubar button {
  padding: 0 8px;
  font-size: 14px;
}
u {
  text-underline-offset: 2px;
}
.toolbar {
  display: flex;
  align-items: center;
  height: 37px;
  flex: none;
  padding: 1px 0 0 5px;
  border-bottom: 1px solid #b4b4b4;
  background: linear-gradient(#f8f8f8, #ececec);
}
.toolbar.last {
  height: 36px;
}
.handle {
  width: 5px;
  height: 18px;
  flex: none;
  margin: 0 4px 0 8px;
  background-image: radial-gradient(circle, #bbb 1px, transparent 1px);
  background-size: 3px 3px;
}
.handle:first-child {
  margin: 0 3px 0 0;
}
.group {
  display: flex;
  align-items: center;
}
.group.spaced {
  gap: 1px;
}
.tool {
  width: 32px;
  height: 31px;
  flex: none;
  display: grid;
  place-items: center;
  position: relative;
  box-sizing: border-box;
}
.tool svg {
  width: 24px;
  height: 24px;
}
.tool.active {
  background: #dadada;
  border: 1px solid #a3a3a3;
  border-radius: 3px;
}
.dropdown::after {
  content: "";
  position: absolute;
  right: 2px;
  bottom: 2px;
  border: 3px solid transparent;
  border-top-color: #555;
  border-bottom: 0;
}
.sep {
  width: 1px;
  height: 20px;
  margin: 0 3px 0 2px;
  background: #cfcfcf;
}
.time {
  gap: 2px;
  font-size: 14px;
  padding-right: 4px;
}
.combo {
  position: relative;
  display: flex;
}
.combo select {
  appearance: none;
  width: 100%;
  height: 25px;
  border: 1px solid #ababab;
  border-radius: 3px;
  padding: 0 20px 0 4px;
  font-size: 14px;
  background: linear-gradient(#fdfdfd, #eeeeee);
}
.combo::after {
  content: "";
  position: absolute;
  right: 7px;
  top: 10px;
  border: 4px solid transparent;
  border-top: 5px solid #555;
  border-bottom: 0;
}
.w-time {
  width: 66px;
}
.w-array {
  width: 184px;
  margin-right: 4px;
}
.w-array select {
  padding-left: 24px;
}
.w-array::before {
  content: "";
  position: absolute;
  left: 12px;
  top: 11px;
  width: 2px;
  height: 2px;
  background: #f5d66c;
  border: 1px solid #d29b20;
}
.w-comp {
  width: 86px;
}
.w-repr {
  width: 163px;
}
.spin {
  display: flex;
  width: 51px;
  height: 22px;
  border: 1px solid #ababab;
  border-radius: 3px;
  background: #fff;
  overflow: hidden;
}
.spin input {
  width: 37px;
  padding-left: 4px;
  box-sizing: border-box;
}
.steps {
  display: flex;
  flex-direction: column;
  justify-content: space-evenly;
  align-items: center;
  flex: 1;
  border-left: 1px solid #c8c8c8;
  background: #f2f2f2;
}
.up,
.down {
  width: 0;
  height: 0;
  border: 3px solid transparent;
}
.up {
  border-top: 0;
  border-bottom: 4px solid #555;
}
.down {
  border-bottom: 0;
  border-top: 4px solid #aaa;
}
.textbutton {
  margin: 0 11px 0 7px;
  color: #b7b7b7;
  font-size: 14px;
}
.tabs {
  display: flex;
  align-items: flex-end;
  height: 29px;
  flex: none;
  border-bottom: 1px solid #adadad;
  box-sizing: border-box;
  padding-left: 1px;
}
.tab {
  display: flex;
  align-items: center;
  width: 128px;
  height: 28px;
  margin-bottom: -1px;
  padding-left: 10px;
  box-sizing: border-box;
  border: 1px solid #b2b2b2;
  border-bottom: 0;
  border-radius: 3px 3px 0 0;
  background: linear-gradient(#fff, #f4f4f4);
}
.winicon {
  width: 16px;
  height: 16px;
}
.tabname {
  margin: 0 6px 0 4px;
  font-size: 14px;
  white-space: nowrap;
}
.close svg {
  width: 11px;
  height: 11px;
}
.newtab {
  width: 33px;
  height: 25px;
  box-sizing: border-box;
  background: #e4e4e4;
  border: 1px solid #b8b8b8;
  border-left: 0;
  border-bottom: 0;
  border-radius: 0 3px 0 0;
}
.viewbar {
  display: flex;
  align-items: center;
  height: 27px;
  flex: none;
  padding-left: 2px;
  overflow: hidden;
}
.small {
  width: 26px;
  height: 24px;
  flex: none;
  display: grid;
  place-items: center;
}
.small svg {
  width: 16px;
  height: 16px;
}
.viewbar .sep {
  height: 14px;
  width: 2px;
  margin: 0 2px;
  background: #ddd;
  flex: none;
}
.viewname {
  margin-left: auto;
  margin-right: 11px;
  color: #000;
  font-size: 15px;
  font-weight: bold;
  text-underline-offset: 3px;
}
.split {
  width: 26px;
  height: 25px;
  flex: none;
  display: grid;
  place-items: center;
  box-sizing: border-box;
  border: 1px solid #b3b3b3;
  border-radius: 3px;
  margin-right: 1px;
  background: linear-gradient(#fcfcfc, #f0f0f0);
}
.split:last-child {
  margin-right: -21px;
}
.split svg {
  width: 14px;
  height: 14px;
}
.view {
  position: relative;
  flex: 1;
  margin-left: 2px;
  border: 2px solid #0000ff;
  border-width: 2px 0 0 2px;
  box-shadow: inset 1px 1px 0 #f4f4f4;
  background: #52576e;
  overflow: hidden;
}
.field {
  position: absolute;
  left: 79px;
  right: 6px;
  top: 310px;
  height: 364px;
  background:
    linear-gradient(#5d6fae 1px, #a9b0b5 1px 2px, #b7a293 2px 3px, transparent 3px),
    linear-gradient(0deg, #3f68bc 1px, #8a8fb0 1px 2px, #c68f74 2px 3px, transparent 3px),
    #9b2727;
}
.legend {
  position: absolute;
  left: 412px;
  top: 408px;
  width: 16px;
  height: 324px;
  background: linear-gradient(#b40426, #cc403a 10%, #e36c55 20%, #f4987a 30%, #f6b79b 38%, #edd1c2 46%, #dddcdc 51%, #c9d8ef 58%, #aec9fc 66%, #92b4fe 74%, #7093f3 84%, #5470de 92%, #3b4cc0);
}
.tick {
  position: absolute;
  left: 30px;
  margin-top: -12px;
  color: #f4f4f4;
  font: 17px/20px Lato, "Open Sans", sans-serif;
}
.tick::before {
  content: "";
  position: absolute;
  left: -18px;
  top: 11px;
  width: 12px;
  height: 1px;
  background: #fff;
}
.title {
  position: absolute;
  left: 504px;
  top: 517px;
  writing-mode: vertical-rl;
  transform: rotate(180deg);
  color: #f4f4f4;
  font: 18px/20px Lato, "Open Sans", sans-serif;
}
</style>
